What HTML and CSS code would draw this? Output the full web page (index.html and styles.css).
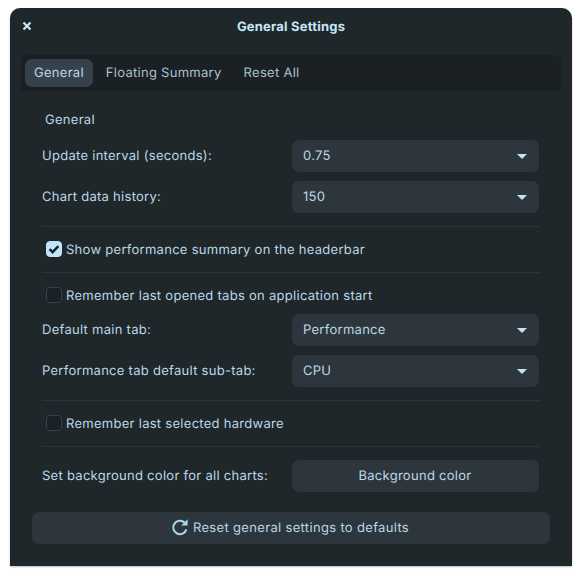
FILE: index.html
```html
<!DOCTYPE html>
<html lang="en">
<head>
<meta charset="utf-8">
<title>General Settings</title>
<link rel="stylesheet" href="styles.css">
</head>
<body>
<div class="window">
  <header class="titlebar">
    <svg class="close" viewBox="0 0 10 10" width="10" height="10"><path d="M1.5 1.5l7 7M8.5 1.5l-7 7"/></svg>
    <h1 class="title">General Settings</h1>
  </header>
  <nav class="tabs">
    <span class="tab active">General</span>
    <span class="tab">Floating Summary</span>
    <span class="tab">Reset All</span>
  </nav>
  <main class="content">
    <div class="section-title">General</div>
    <div class="form-row first"><span class="label">Update interval (seconds):</span><div class="combo"><span>0.75</span><i class="arrow"></i></div></div>
    <div class="form-row"><span class="label">Chart data history:</span><div class="combo"><span>150</span><i class="arrow"></i></div></div>
    <hr class="sep">
    <div class="check-row"><span class="check on"><svg viewBox="0 0 16 16" width="16" height="16"><path d="M3.6 8.2l3 3 5.8-6"/></svg></span><span class="check-text">Show performance summary on the headerbar</span></div>
    <hr class="sep">
    <div class="check-row"><span class="check"></span><span class="check-text">Remember last opened tabs on application start</span></div>
    <div class="form-row"><span class="label">Default main tab:</span><div class="combo"><span>Performance</span><i class="arrow"></i></div></div>
    <div class="form-row"><span class="label">Performance tab default sub-tab:</span><div class="combo"><span>CPU</span><i class="arrow"></i></div></div>
    <hr class="sep">
    <div class="check-row"><span class="check"></span><span class="check-text">Remember last selected hardware</span></div>
    <hr class="sep">
    <div class="form-row first"><span class="label">Set background color for all charts:</span><div class="combo center"><span>Background color</span></div></div>
    <div class="reset">
      <svg class="reset-icon" viewBox="0 0 18 18" width="18" height="18"><path class="ring" d="M13.6 4.6A6.7 6.7 0 1 0 15.4 11.4"/><path class="tip" d="M16.6 1.2v6.4h-6.4z"/></svg>
      <span class="reset-text">Reset general settings to defaults</span>
    </div>
  </main>
</div>
</body>
</html>
```
FILE: styles.css
```css
* { box-sizing: border-box; }
html, body { margin: 0; height: 100%; background: #fff; }
body {
  padding: 8px 10px 10px;
  font-family: Inter, "Noto Sans", sans-serif;
  font-size: 13px;
  line-height: 16px;
  letter-spacing: 0.28px;
  color: #bcd7e6;
  overflow: hidden;
  text-rendering: geometricPrecision;
}
.window {
  height: 558px;
  background: #1f272b;
  border-radius: 10px 10px 0 0;
  box-shadow: 0 1px 2px rgba(0,0,0,.25);
  padding: 0 11px;
}
.titlebar {
  height: 47px;
  position: relative;
  display: flex;
  align-items: center;
  justify-content: center;
}
.close { position: absolute; left: 1px; top: 13px; }
.close path { fill: none; stroke: #c3e6f7; stroke-width: 2.2; }
.title { margin: -9px 0 0; font-size: 13px; font-weight: 700; letter-spacing: 0.2px; color: #c3e6f7; }
.tabs {
  height: 36px;
  background: #1a2024;
  border-radius: 6px 6px 0 0;
  padding: 4px;
  display: flex;
  gap: 4px;
}
.tab {
  height: 28px;
  padding: 0 9px;
  border-radius: 7px;
  display: flex;
  align-items: center;
  color: #a9c1ce;
}
.tab.active { background: #35424b; color: #bcd7e6; }
.content { padding: 0 11px; }
.section-title { height: 16px; margin: 21px 0 0 13px; }
.form-row { display: flex; align-items: center; justify-content: space-between; padding: 0 11px 0 10px; margin-top: 9px; }
.form-row.first { margin-top: 13px; }
.section-title + .form-row.first { margin-top: 12px; }
.label { flex: 1; }
.combo {
  width: 247px;
  height: 32px;
  background: #2d363d;
  border-radius: 7px;
  padding: 0 12px 0 11px;
  display: flex;
  align-items: center;
  justify-content: space-between;
}
.combo.center { justify-content: center; }
.arrow {
  width: 0; height: 0;
  border-left: 5px solid transparent;
  border-right: 5px solid transparent;
  border-top: 5px solid #c3e6f7;
}
.sep { height: 1px; border: 0; background: #2d363d; margin: 13px 0 0 10px; width: 498px; }
.check-row { display: flex; align-items: center; gap: 4px; height: 20px; margin: 12px 0 13px 14px; }
.check-row + .sep { margin-top: 0; }
.check-row:has(+ .form-row) { margin-bottom: 0; }
.check-text { margin-top: 2px; }
.check {
  width: 16px; height: 16px;
  border-radius: 4px;
  border: 1px solid #38424a;
  background: #1a2024;
  display: block;
}
.check.on { background: #bfe6fb; border-color: #bfe6fb; }
.check.on svg { display: block; margin: -1px; }
.check.on path { fill: none; stroke: #1a2024; stroke-width: 2.4; }
.reset {
  margin: 20px 0 0;
  height: 32px;
  background: #2d363d;
  border-radius: 7px;
  display: flex;
  align-items: center;
  justify-content: center;
  gap: 4px;
}
.reset-text { letter-spacing: 0.33px; margin-right: 2px; }
.ring { fill: none; stroke: #a9d8f0; stroke-width: 2; }
.tip { fill: #a9d8f0; }
.reset-icon { margin-top: -3px; }
```
